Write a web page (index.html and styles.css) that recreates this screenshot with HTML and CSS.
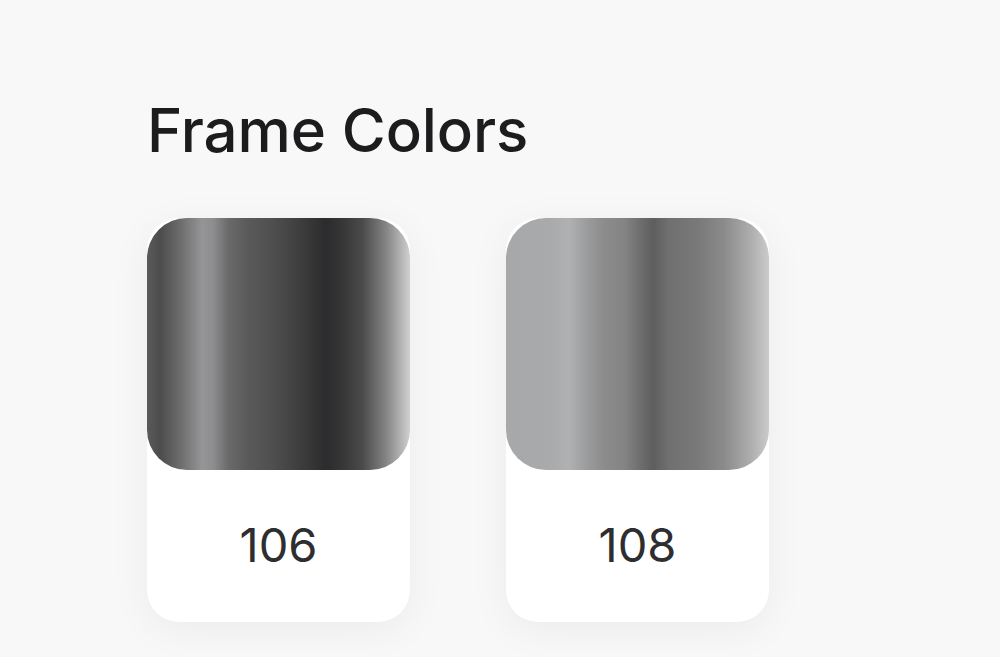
FILE: index.html
```html
<!DOCTYPE html>
<html>
<head>
<meta charset="utf-8">
<link rel="stylesheet" href="styles.css">
</head>
<body>
<section class="frames">
  <h2 class="title">Frame Colors</h2>
  <div class="cards">
    <div class="card">
      <div class="swatch swatch-106"></div>
      <div class="label">106</div>
    </div>
    <div class="card">
      <div class="swatch swatch-108"></div>
      <div class="label">108</div>
    </div>
  </div>
</section>
</body>
</html>
```

FILE: styles.css
```css
html, body {
  margin: 0;
  padding: 0;
  background: #f8f8f8;
  height: 100%;
  overflow: hidden;
}
.frames {
  padding: 92px 0 0 147px;
  font-family: "Inter", "Noto Sans", sans-serif;
}
.title {
  margin: 0;
  font-size: 60px;
  font-weight: 500;
  color: #1c1c1e;
  line-height: 76px;
  letter-spacing: -0.1px;
}
.cards {
  display: flex;
  gap: 96px;
  margin-top: 50px;
}
.card {
  width: 263px;
  height: 404px;
  background: #ffffff;
  border-radius: 32px;
  box-shadow: 0 8px 40px rgba(0, 0, 0, 0.055);
  display: flex;
  flex-direction: column;
}
.swatch {
  height: 252px;
  border-radius: 40px;
}
.swatch-106 {
  background: linear-gradient(90deg,
    #5a5a5a 0%, #4c4c4c 5%, #6e6e6e 13%, #959597 21%, #8e8e90 25%,
    #6a6a6a 31%, #5a5a5a 38%, #505050 47%, #3e3e3e 58%, #2c2b2d 68%,
    #383838 75%, #4b4b4b 82%, #858585 91%, #d0d0d0 100%);
}
.swatch-108 {
  background: linear-gradient(90deg,
    #a7a8aa 0%, #a9aaac 17%, #b0b1b3 24%, #9d9e9f 30%, #8c8c8c 37%,
    #848484 45%, #6e6e6e 51%, #5e5e5e 56%, #707070 62%, #797979 73%,
    #8b8b8b 83%, #adadad 93%, #cbcbcb 100%);
}
.label {
  flex: 1;
  display: flex;
  align-items: center;
  justify-content: center;
  font-size: 47px;
  font-weight: 400;
  color: #2e2e30;
  padding-bottom: 4px;
}
```
